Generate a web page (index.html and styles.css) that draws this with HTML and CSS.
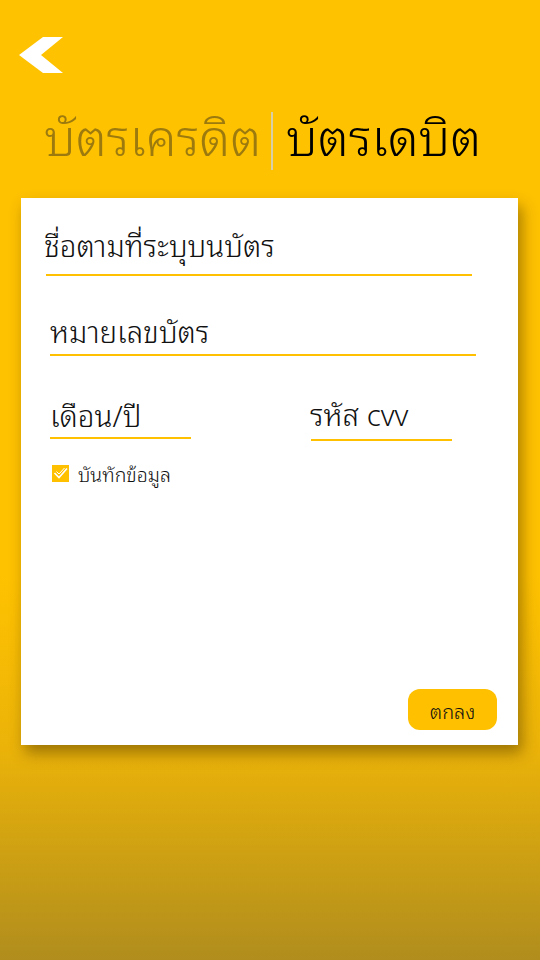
FILE: index.html
```html
<!DOCTYPE html>
<html lang="th">
<head>
<meta charset="utf-8">
<link rel="stylesheet" href="styles.css">
</head>
<body>
<div class="screen">
  <div class="topbar">
    <svg class="back" width="46" height="38" viewBox="0 0 46 38"><polygon points="24,0 44,0 22,18 44,36 24,36 0,18" fill="#fff"/></svg>
  </div>
  <div class="tabs">
    <span class="tab inactive">บัตรเครดิต</span>
    <span class="sep"></span>
    <span class="tab active">บัตรเดบิต</span>
  </div>
  <div class="card">
    <div class="field f1"><span>ชื่อตามที่ระบุบนบัตร</span></div>
    <div class="field f2"><span>หมายเลขบัตร</span></div>
    <div class="row">
      <div class="field f3"><span>เดือน/ปี</span></div>
      <div class="field f4"><span>รหัส cvv</span></div>
    </div>
    <div class="check">
      <svg class="box" width="17" height="17" viewBox="0 0 17 17"><rect width="17" height="17" fill="#FFC000"/><path d="M2.5 8 L7 12.5 L15 3.5" fill="none" stroke="#fff" stroke-width="1.6"/><path d="M4.5 6.5 L7 9 L12.5 3" fill="none" stroke="#fff" stroke-width="1"/></svg>
      <span>บันทักข้อมูล</span>
    </div>
    <div class="actions"><button class="ok">ตกลง</button></div>
  </div>
</div>
</body>
</html>
```
FILE: styles.css
```css
html, body { margin: 0; padding: 0; }
body {
  font-family: "Noto Sans Thai Looped", "Loma", "Waree", "Garuda", "Tlwg Typo", "Noto Serif Thai", "Noto Sans Thai", "Noto Sans", sans-serif;
  font-weight: 350;
}
.screen {
  width: 540px;
  height: 960px;
  overflow: hidden;
  background: linear-gradient(to bottom, #FFC200 0%, #FFC200 60%, #EBB309 78%, #B08D1D 100%);
  display: flex;
  flex-direction: column;
}
.topbar {
  padding: 37px 0 0 19px;
  height: 38px;
}
.back { display: block; }
.tabs {
  display: flex;
  align-items: flex-start;
  padding-left: 44px;
  margin-top: 37px;
  height: 58px;
}
.tab {
  font-size: 50px;
  line-height: 44px;
}
.inactive { color: #9C7A0E; }
.active { color: #000; }
.sep {
  width: 2px;
  height: 58px;
  background: #D8CFA8;
  margin: 0 13px 0 10px;
}
.card {
  margin: 28px 0 0 21px;
  width: 497px;
  height: 547px;
  background: #fff;
  box-shadow: 4px 8px 14px rgba(60, 40, 0, 0.45);
  box-sizing: border-box;
  display: flex;
  flex-direction: column;
}
.field {
  border-bottom: 2px solid #FFC000;
  display: flex;
  align-items: flex-end;
  box-sizing: content-box;
}
.field span {
  font-size: 29.5px;
  line-height: 1;
  color: #111;
  display: block;
}
.f1 { margin-left: 25px; width: 426px; height: 76px; }
.f1 span { margin-left: -2px; padding-bottom: 16px; }
.f2 { margin-left: 29px; width: 426px; height: 78px; }
.f2 span { padding-bottom: 10px; }
.row {
  display: flex;
  align-items: flex-start;
}
.f3 { margin-left: 29px; width: 141px; height: 81px; }
.f3 span { padding-bottom: 9px; }
.f4 { margin-left: 120px; width: 141px; height: 83px; }
.f4 span { margin-left: -1px; padding-bottom: 12px; }
.check {
  display: flex;
  align-items: center;
  gap: 9px;
  margin: 23px 0 0 31px;
}
.check span { font-size: 19.5px; color: #111; line-height: 1; }
.box { display: block; }
.actions {
  margin-top: auto;
  display: flex;
  justify-content: flex-end;
  padding: 0 21px 15px 0;
}
.ok {
  width: 89px;
  height: 41px;
  border: none;
  border-radius: 12px;
  background: #FFC000;
  font-family: inherit;
  font-weight: 350;
  font-size: 20px;
  color: #111;
  padding: 0;
}
```
